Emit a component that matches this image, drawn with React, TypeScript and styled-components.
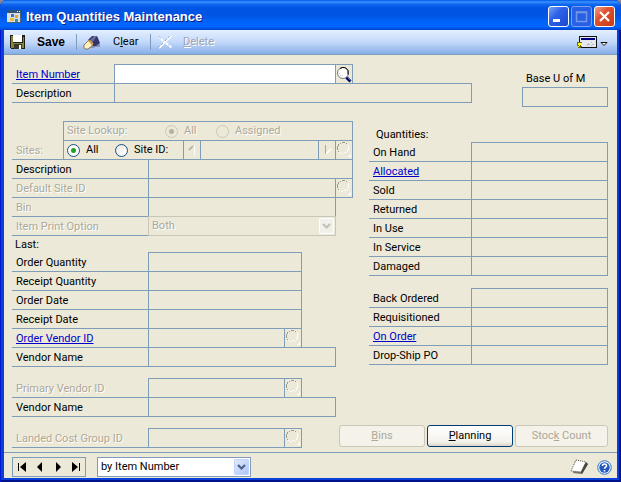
import React, { useId, useState } from "react";
import styled, { createGlobalStyle, css } from "styled-components";

const line = "#7f9db9";
const face = "#ece9d8";
const faded = "#aca899";
const ui = 'Roboto, "Liberation Sans", sans-serif';

const GlobalStyle = createGlobalStyle`
  *, *::before, *::after { box-sizing: border-box; }
  body { margin: 0; background: #8d8794; font-family: ${ui}; font-size: 11px; line-height: 16px; color: #000; }
  input, select, button { font: inherit; color: inherit; margin: 0; padding: 0; border: 0; background: none; border-radius: 0; }
  svg { display: block; flex: none; }
`;

const fadedText = css`color: ${faded}; text-shadow: 1px 1px 0 #fff;`;

const Window = styled.div`
  display: flex; flex-direction: column; min-height: 100vh;
  padding: 0 4px 4px; border-radius: 7px 7px 0 0; overflow: hidden;
  background: #0a3fd8;
  box-shadow: inset 1px 0 #0019cf, inset -2px 0 #00138c, inset 0 -2px #00138c;
`;
const TitleBar = styled.header`
  display: flex; align-items: center; gap: 5px; height: 30px; margin: 0 -4px; padding: 3px 6px 0 7px;
  background: linear-gradient(#0058e6 0, #3a93ff 2px, #1269f2 4px, #0054e3 8px, #0055e5 16px, #0064fb 22px, #0066ff 26px, #005bef 28px, #0040c8 30px);
`;
const Title = styled.h1`
  flex: 1; margin: 0; font-family: "Liberation Sans", Arial, sans-serif; font-size: 13px; line-height: 18px; font-weight: 700; color: #fff; text-shadow: 1px 1px 0 #0a1883; white-space: nowrap;
`;
const Captions = styled.div`display: flex; gap: 2px;`;
const Caption = styled.button<{ $kind: "plain" | "dim" | "close" }>`
  display: grid; place-items: center; width: 21px; height: 21px; border-radius: 3px;
  border: 1px solid ${p => (p.$kind === "dim" ? "#7b9ff0" : "#fff")};
  background: ${p => p.$kind === "close" ? "linear-gradient(135deg, #f0a08a, #e0512d 40%, #c63a12)" : p.$kind === "dim" ? "#2760e4" : "linear-gradient(135deg, #7ba3f5, #2d62e8 40%, #1a48cf)"};
`;
const ToolBar = styled.div`
  display: flex; align-items: center; height: 25px; padding: 0 9px 0 6px;
  background: linear-gradient(#e4efff, #c4d9fa 50%, #86aee8); border-bottom: 1px solid ${line};
`;
const Tool = styled.button<{ $width: number; $gap?: number; $bold?: boolean }>`
  display: flex; align-items: center; gap: ${p => p.$gap ?? 12}px; width: ${p => p.$width}px; height: 20px;
  ${p => p.$bold && css`font: 700 12px/16px "Liberation Sans", Arial, sans-serif;`}
  &:disabled { color: #9aa5b8; text-shadow: 1px 1px 0 #fff; }
`;
const Divider = styled.span`width: 1px; height: 16px; background: ${line}; margin-right: 6px;`;
const Push = styled.span`flex: 1;`;
const ViewButton = styled.button`display: flex; align-items: center; gap: 3px;`;

const Body = styled.main`flex: 1; display: flex; flex-direction: column; padding: 10px 9px 4px 8px; background: ${face};`;
const TopArea = styled.section`display: grid; grid-template-columns: 460fr 86fr; gap: 50px;`;
const Columns = styled.div`display: grid; grid-template-columns: 341fr 239fr; gap: 16px; margin-top: 15px;`;
const Stack = styled.div<{ $top?: number }>`margin-top: ${p => p.$top ?? 0}px; min-width: 0;`;
const BottomArea = styled.div`display: flex; align-items: flex-end; justify-content: space-between; margin-top: 8px;`;
const BottomField = styled.div`flex: 0 1 290px;`;

const Row = styled.div<{ $end?: number }>`display: flex; height: 19px; padding-right: ${p => p.$end ?? 0}px;`;
const LabelCell = styled.div<{ $width: number; $faded?: boolean }>`
  flex: none; width: ${p => p.$width}px; height: 19px; padding: 1px 4px 0; line-height: 18px; white-space: nowrap;
  border-bottom: 1px solid ${line};
  ${p => p.$faded && fadedText}
  a { color: #0000c8; }
`;
const Box = styled.input`
  flex: 1; min-width: 0; width: 100%; height: 20px; margin-top: -1px; padding: 0 3px;
  border: 1px solid ${line}; background: ${face}; outline: none;
  &:enabled:not(:read-only) { background: #fff; }
`;
const SiteBox = styled(Box)`margin-left: -1px;`;
const Attached = styled.button`
  flex: none; display: grid; place-items: center; width: 18px; height: 20px; margin: -1px 0 0 -1px; border: 1px solid ${line};
`;
const SectionName = styled.h2<{ $indent: number }>`
  margin: 0; padding-left: ${p => p.$indent}px; height: 17px; line-height: 17px; font-size: 11px; font-weight: 400;
`;
const TopLabel = styled.label`display: block; height: 23px; padding: 6px 4px 0; white-space: nowrap;`;

const SiteBlock = styled.div`display: flex;`;
const SiteName = styled.div`
  width: 51px; height: 38px; padding: 20px 4px 0; line-height: 18px; border-bottom: 1px solid ${line}; ${fadedText}
`;
const SiteLines = styled.div`flex: 1; min-width: 0;`;
const Choices = styled.div<{ $width?: number }>`
  display: flex; align-items: center; height: 20px; padding: 0 3px; margin-top: -1px; border: 1px solid ${line};
  flex: ${p => (p.$width ? `0 0 ${p.$width}px` : "1")};
`;
const Choice = styled.label<{ $width: number; $faded?: boolean }>`
  display: flex; align-items: center; gap: 6px; width: ${p => p.$width}px; white-space: nowrap; ${p => p.$faded && fadedText}
`;
const ChoiceHead = styled.span`width: 98px; ${fadedText}`;
const Radio = styled.input`
  appearance: none; flex: none; width: 13px; height: 13px; border: 1px solid #1d5281; border-radius: 50%;
  background: radial-gradient(circle at 70% 70%, #fff, #e3e2dc);
  &:checked { background: radial-gradient(circle, #21a121 0 2px, #fff 3px); }
  &:disabled { border-color: #cac8bb; background: ${face}; }
  &:disabled:checked { background: radial-gradient(circle, #b4b1a3 0 2px, ${face} 3px); }
`;

const Drop = styled.div<{ $off?: boolean }>`
  flex: 1; display: grid; grid-template-columns: minmax(0, 1fr) 17px; height: 20px; margin-top: -1px; min-width: 0;
  border: 1px solid ${p => (p.$off ? "#c9c7ba" : line)}; background: ${p => (p.$off ? face : "#fff")};
`;
const Select = styled.select`
  appearance: none; grid-area: 1 / 1 / 2 / 3; height: 18px; padding: 0 3px; outline: none;
  &:disabled { opacity: 1; ${fadedText} }
`;
const DropMark = styled.span<{ $off?: boolean }>`
  grid-area: 1 / 2; display: grid; place-items: center; margin: 1px; border-radius: 1px; pointer-events: none;
  border: 1px solid ${p => (p.$off ? "#fff" : "#c3d3fd")};
  background: ${p => (p.$off ? "#f1f0ea" : "linear-gradient(135deg, #dfe9ff, #b0c6f7)")};
`;

const Actions = styled.div`display: flex; gap: 2px;`;
const Action = styled.button<{ $width: number }>`
  width: ${p => p.$width}px; height: 22px; margin-bottom: 1px; border: 1px solid #003c74; border-radius: 3px;
  background: linear-gradient(#fff, #f3f2ec 80%, #d9d4c8);
  &:disabled { border-color: #c9c7ba; background: #f4f2e9; color: ${faded}; }
`;
const Footer = styled.footer`
  display: flex; align-items: center; height: 26px; padding: 3px 5px 0 8px; background: ${face}; border-top: 1px solid ${line};
`;
const Navigator = styled.nav`
  display: grid; grid-template-columns: repeat(4, 1fr); width: 74px; height: 20px; border: 1px solid ${line};
  button { display: grid; place-items: center; }
`;
const SortBox = styled.div`display: flex; width: 154px; margin: 1px auto 0 11px;`;
const IconButton = styled.button`margin-left: 8px;`;

const Lens = ({ off }: { off?: boolean }) => off ? (
  <svg width="16" height="18" viewBox="0 0 16 18" fill="none" shapeRendering="crispEdges">
    <path d="M1 5h1v4h-1zM2 3h1v2h-1zM4 2h1v1h-1zM6 1h3v1h-3zM10 2h1v1h-1zM2 10h1v1h-1z" fill="#9d9a8c" />
    <path d="M12 4h1v5h-1zM11 9h1v2h-1zM8 11h2v1h-2zM5 12h2v1h-2zM3 11h1v1h-1zM14 13h1v3h-3v-1h2z" fill="#fff" />
  </svg>
) : (
  <svg width="16" height="18" viewBox="0 0 16 18" fill="none">
    <circle cx="7" cy="8" r="5.5" fill="#fff" stroke="#77777f" />
    <path d="M4 3.500Q9 .5 12 5.500v4" stroke="#000" /><path d="M3 8q1 3 4 3" stroke="#b7bdd8" strokeDasharray="1 1" />
    <path d="M10.500 12.500l4 4" stroke="#000050" strokeWidth="3" /><path d="M11.500 12.500l3 3" stroke="#2c78e0" strokeWidth="1" />
  </svg>
);
const Chevron = ({ off }: { off?: boolean }) => (
  <svg width="9" height="7" viewBox="0 0 9 7"><path d="M1 1l3.500 3.500L8 1" fill="none" stroke={off ? "#c3c1b4" : "#4d6185"} strokeWidth="2.200" /></svg>
);
const SiteArrow = ({ next }: { next?: boolean }) => (
  <svg width="10" height="12" viewBox="0 0 10 12" fill="none">
    {next ? <><path d="M3.500 1v9" stroke="#aca899" /><path d="M4 10l5-5" stroke="#fff" strokeWidth="1.500" /></>
      : <><path d="M2 6l4-4" stroke="#aca899" strokeWidth="1.500" /><path d="M7.500 2v9" stroke="#fff" /></>}
  </svg>
);
const AppIcon = () => (
  <svg width="14" height="13" viewBox="0 0 14 13" shapeRendering="crispEdges">
    <path d="M0 0h14v13H0z" fill="#d8e0ec" /><path d="M0 0h14v3H0z" fill="#315477" /><path d="M10 1h1v1h-1zM12 1h1v1h-1z" fill="#fff" />
    <path d="M4 4h3v3H4z" fill="#3973c7" /><path d="M8 5h3v3H8z" fill="#e5a72c" /><path d="M3 8h4v3H3z" fill="#efbd3b" /><path d="M8 9h3v3H8z" fill="#348eb1" /><path d="M13 3h1v10H0v-1h13z" fill="#4f6273" />
  </svg>
);
const SaveIcon = () => (
  <svg width="15" height="14" viewBox="0 0 15 14" shapeRendering="crispEdges">
    <path d="M0 0h15v14H1L0 13z" fill="#202016" /><path d="M1 1h2v7h10V2h1v11H1z" fill="#85843c" />
    <path d="M3 0h9v7H3z" fill="#fff" /><path d="M4 9h8v5H4z" fill="#39392d" /><path d="M9 10h2v4H9z" fill="#fff" />
  </svg>
);
const EraserIcon = () => (
  <svg width="18" height="15" viewBox="0 0 18 15">
    <path d="M7 13l6-6 4 2v3h-5l-1 1z" fill="#8692b4" />
    <path d="M5 5l4-4h5l3 7-4 3-4 0z" fill="#34346b" /><path d="M7 5l4-4h3L9 8z" fill="#6c6c9d" />
    <path d="M1 10l5-5 4 3v2l-5 4H2l-1-1z" fill="#fff3bd" stroke="#715b42" strokeWidth=".8" /><path d="M5 6l2-1 3 3-1 3-2-3z" fill="#d39b4c" />
  </svg>
);
const DeleteIcon = () => (
  <svg width="16" height="15" viewBox="0 0 16 15" fill="none">
    <path d="M1 1l5 5M9 8l6 5" stroke="#fff" strokeWidth="2" strokeDasharray="3 1" /><path d="M14 1L2 13" stroke="#fff" strokeWidth="2" />
    <path d="M13 1L8 6M6 8l-5 5M1 1l3 2" stroke="#99a9c5" strokeDasharray="3 1" />
  </svg>
);
const ViewIcon = () => (
  <svg width="20" height="14" viewBox="0 0 20 14" shapeRendering="crispEdges">
    <path d="M2 1h18v12H2z" fill="#e5e8ed" /><path d="M2 1h18v12h-1V2H3v5H2zM4 12h16v1H4z" fill="#111" />
    <path d="M4 3h14v2H4z" fill="#000080" /><path d="M10 9h1v-1h1v1h1v1h-2v1h-1zM14 7h1v1h-1zM15 9h2v1h-2zM13 11h1v-1h1v1z" fill="#b9bcc2" />
    <path d="M0 7h5v5H4v1H1v-2H0z" fill="#6b6a16" /><path d="M1 8h4v3H4v-1H3v1H2v1H1v-1h1v-1H1z" fill="#ffff21" />
  </svg>
);
const NoteIcon = () => (
  <svg width="19" height="16" viewBox="0 0 19 16">
    <path d="M5 2l13 3-6 10-9-1z" fill="#77756b" /><path d="M6 1l10 2-5 10L1 12z" fill="#fff" stroke="#55534b" strokeWidth="1" strokeDasharray="1 1" /><path d="M16 3l2 2-6 10-1-2z" fill="#48463f" />
  </svg>
);
const HelpIcon = () => (
  <svg width="15" height="15" viewBox="0 0 15 15" fill="none">
    <circle cx="7.500" cy="7.500" r="6.800" fill="#eef4ff" stroke="#3978c4" /><circle cx="7.500" cy="7.500" r="5.200" fill="#2458c0" />
    <path d="M5.500 6q0-2 2-2t2 1.700q0 1-1 1.400-1 .5-1 1.700M7.500 10v1.500" stroke="#fff" strokeWidth="1.600" />
  </svg>
);

type EntryProps = { name: string; label?: number; end?: number; off?: boolean; link?: boolean; lookup?: boolean; edit?: boolean };
function Entry({ name, label = 136, end = 0, off, link, lookup, edit }: EntryProps) {
  const id = useId();
  return (
    <Row $end={end}>
      <LabelCell $width={label} $faded={off}>
        <label htmlFor={id}>{link ? <a href="#open">{name}</a> : name}</label>
      </LabelCell>
      <Box id={id} readOnly={!edit} disabled={off} />
      {lookup && <Attached disabled={!edit} aria-label={"Look up " + name}><Lens off={!edit} /></Attached>}
    </Row>
  );
}

export default function App() {
  const [site, setSite] = useState("all");
  return (
    <>
      <GlobalStyle />
      <Window>
        <TitleBar>
          <AppIcon />
          <Title>Item Quantities Maintenance</Title>
          <Captions>
            <Caption $kind="plain" aria-label="Minimize"><svg width="15" height="15"><path d="M2 10h7v3H2z" fill="#fff" /></svg></Caption>
            <Caption $kind="dim" aria-label="Maximize" disabled><svg width="15" height="15"><path d="M2.500 3v9.500h10V3zM2 3.500h11" fill="none" stroke="#7597e8" strokeWidth="1.500" /></svg></Caption>
            <Caption $kind="close" aria-label="Close"><svg width="15" height="15"><path d="M3 3l9 9M12 3l-9 9" stroke="#fff" strokeWidth="2.200" /></svg></Caption>
          </Captions>
        </TitleBar>
        <ToolBar>
          <Tool $width={66} $bold><SaveIcon />Save</Tool>
          <Divider />
          <Tool $width={67}><EraserIcon /><span>C<u>l</u>ear</span></Tool>
          <Divider />
          <Tool $width={70} $gap={10} disabled><DeleteIcon /><span><u>D</u>elete</span></Tool>
          <Push />
          <ViewButton aria-label="View"><ViewIcon /><svg width="8" height="9"><path d="M1 4.500h6l-3 3z" fill="#fff" stroke="#111" /></svg></ViewButton>
        </ToolBar>
        <Body>
          <TopArea>
            <Stack>
              <Entry name="Item Number" label={102} end={119} link lookup edit />
              <Entry name="Description" label={102} />
            </Stack>
            <Stack>
              <TopLabel htmlFor="base">Base U of M</TopLabel>
              <Row><Box id="base" readOnly /></Row>
            </Stack>
          </TopArea>
          <Columns>
            <Stack>
              <SiteBlock>
                <SiteName>Sites:</SiteName>
                <SiteLines>
                  <Row>
                    <Choices>
                      <ChoiceHead>Site Lookup:</ChoiceHead>
                      <Choice $width={51} $faded><Radio type="radio" name="lookup" disabled defaultChecked />All</Choice>
                      <Choice $width={80} $faded><Radio type="radio" name="lookup" disabled />Assigned</Choice>
                    </Choices>
                  </Row>
                  <Row>
                    <Choices $width={120}>
                      <Choice $width={48}><Radio type="radio" name="site" checked={site === "all"} onChange={() => setSite("all")} />All</Choice>
                      <Choice $width={65}><Radio type="radio" name="site" checked={site === "id"} onChange={() => setSite("id")} />Site ID:</Choice>
                    </Choices>
                    <Attached disabled aria-label="Previous site"><SiteArrow /></Attached>
                    <SiteBox aria-label="Site ID" disabled />
                    <Attached disabled aria-label="Next site"><SiteArrow next /></Attached>
                    <Attached disabled aria-label="Look up site"><Lens off /></Attached>
                  </Row>
                </SiteLines>
              </SiteBlock>
              <Entry name="Description" />
              <Entry name="Default Site ID" off lookup />
              <Entry name="Bin" end={17} off />
              <Row $end={17}>
                <LabelCell $width={136} $faded><label htmlFor="print">Item Print Option</label></LabelCell>
                <Drop $off><Select id="print" disabled><option>Both</option></Select><DropMark $off><Chevron off /></DropMark></Drop>
              </Row>
              <SectionName $indent={3}>Last:</SectionName>
              <Entry name="Order Quantity" end={51} />
              <Entry name="Receipt Quantity" end={51} />
              <Entry name="Order Date" end={51} />
              <Entry name="Receipt Date" end={51} />
              <Entry name="Order Vendor ID" end={51} link lookup />
              <Entry name="Vendor Name" end={17} />
              <Stack $top={12}>
                <Entry name="Primary Vendor ID" end={51} off lookup />
                <Entry name="Vendor Name" end={17} />
              </Stack>
            </Stack>
            <Stack $top={4}>
              <SectionName $indent={7}>Quantities:</SectionName>
              <Entry name="On Hand" label={102} />
              <Entry name="Allocated" label={102} link />
              <Entry name="Sold" label={102} />
              <Entry name="Returned" label={102} />
              <Entry name="In Use" label={102} />
              <Entry name="In Service" label={102} />
              <Entry name="Damaged" label={102} />
              <Stack $top={13}>
                <Entry name="Back Ordered" label={102} />
                <Entry name="Requisitioned" label={102} />
                <Entry name="On Order" label={102} link />
                <Entry name="Drop-Ship PO" label={102} />
              </Stack>
            </Stack>
          </Columns>
          <BottomArea>
            <BottomField><Entry name="Landed Cost Group ID" off lookup /></BottomField>
            <Actions>
              <Action $width={86} disabled><u>B</u>ins</Action>
              <Action $width={86}><u>P</u>lanning</Action>
              <Action $width={93} disabled>Stoc<u>k</u> Count</Action>
            </Actions>
          </BottomArea>
        </Body>
        <Footer>
          <Navigator aria-label="Records">
            <button aria-label="First"><svg width="10" height="10"><path d="M1 1h1v8H1zM9 0v10L3 5z" /></svg></button>
            <button aria-label="Previous"><svg width="10" height="10"><path d="M7 0v10L2 5z" /></svg></button>
            <button aria-label="Next"><svg width="10" height="10"><path d="M3 0v10l5-5z" /></svg></button>
            <button aria-label="Last"><svg width="10" height="10"><path d="M8 1h1v8H8zM1 0v10l6-5z" /></svg></button>
          </Navigator>
          <SortBox>
            <Drop><Select aria-label="Sort"><option>by Item Number</option></Select><DropMark><Chevron /></DropMark></Drop>
          </SortBox>
          <IconButton aria-label="Note"><NoteIcon /></IconButton>
          <IconButton aria-label="Help"><HelpIcon /></IconButton>
        </Footer>
      </Window>
    </>
  );
}
